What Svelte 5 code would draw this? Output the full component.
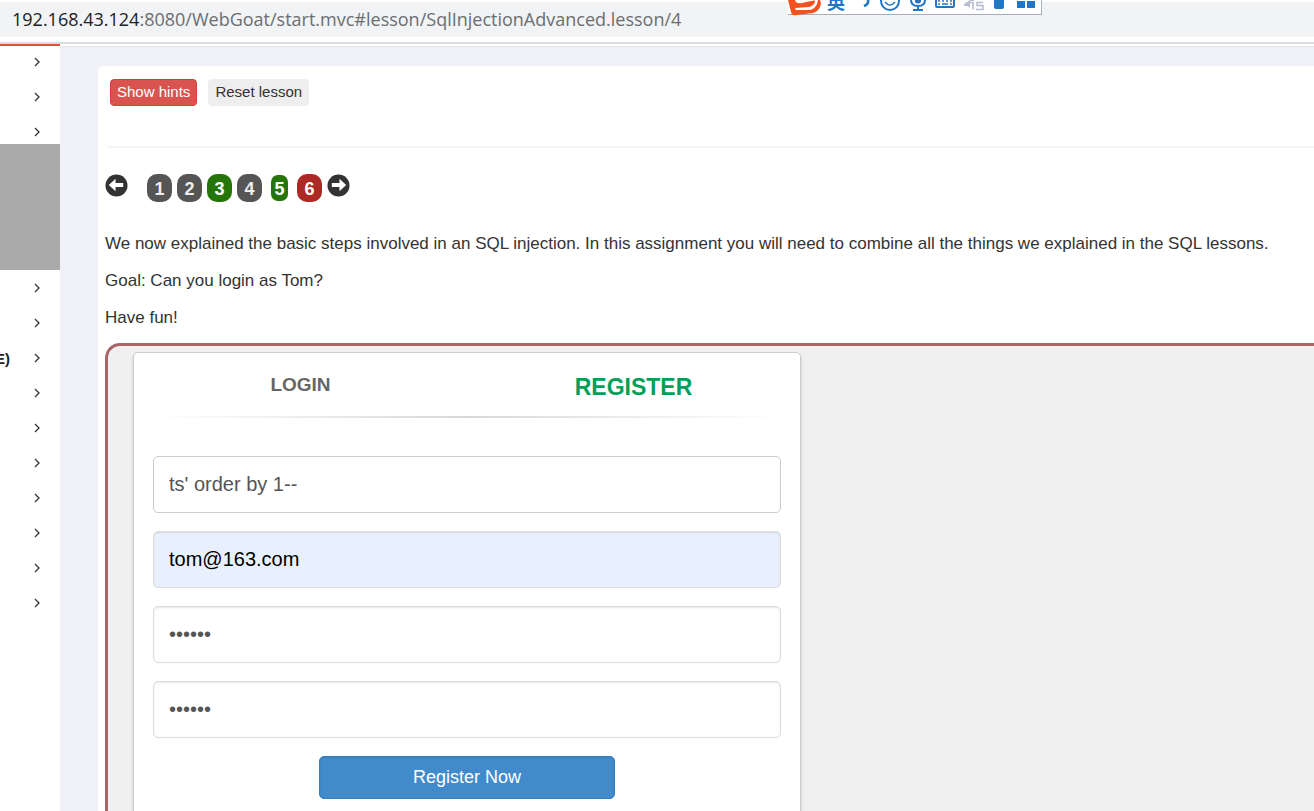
<script lang="ts">
  const upper = ['General', 'Injection basics', 'Introduction'];
  const lower = ['Authentication', 'Sensitive data', 'XXE', 'Access control', 'XSS', 'Deserialization', 'Components', 'Request forgery', 'Client side', 'Challenges'];
  const pages = [
    { n: 1, kind: 'plain' },
    { n: 2, kind: 'plain' },
    { n: 3, kind: 'solved' },
    { n: 4, kind: 'plain' },
    { n: 5, kind: 'solved current' },
    { n: 6, kind: 'open' },
  ];
  let username = $state("ts' order by 1--");
  let email = $state('tom@163.com');
  let password = $state('secret');
  let confirm = $state('secret');
</script>

{#snippet chevron()}
  <svg class="chevron" viewBox="0 0 6 10" aria-hidden="true"><path d="M1 1l4 4-4 4" /></svg>
{/snippet}

<div class="page">
  <header class="address">
    <div class="url"><span class="host">192.168.43.124</span>:8080/WebGoat/start.mvc#lesson/SqlInjectionAdvanced.lesson/4</div>
    <div class="ime">
      <svg class="ime-logo" viewBox="0 0 34 16" aria-hidden="true">
        <path d="M0 0L3 12Q4 16 9 15L25 13Q32 11 33 3L32 0Z" fill="#f4511e" />
        <path d="M7 0Q8 4 14 3L23 1Q27 0 27 1Q27 5 21 7L7 8L8 10L22 10Q29 8 30 0L24 0Z" fill="#fff" />
      </svg>
      <span class="ime-lang">英</span>
      <svg class="ime-icons" viewBox="0 0 182 14" aria-hidden="true">
        <g fill="none" stroke="#2176c7" stroke-width="2">
          <path d="M10 0Q11 4 6 6" stroke-width="2.6" />
          <circle cx="32" cy="1" r="9" />
          <path d="M27 2Q32 8 37 2" stroke-width="1.5" />
          <path d="M53 0Q53 6 60 6Q67 6 67 0M60 6v4M55 10h10" />
          <rect x="78" y="-8" width="18" height="15" rx="1" />
          <path d="M80 1h2m2 0h2m2 0h2m2 0h2M80 4h2m2 0h6m2 0h2" stroke-width="1.5" />
        </g>
        <path d="M57 0h6v2q-3 3-6 0zM136 0h10v7q0 2-2 2h-6q-2 0-2-2zM159 1h8v7h-8zM169 1h8v7h-8zM29 0h1v-2h-1zM34 0h1v-2h-1z" fill="#2176c7" />
        <path d="M106 4l6-4h4v9h-3l-3-3h-4z" fill="#b8c0d0" />
        <path d="M112 1h14v9h-14z" fill="#fff" />
        <path d="M112 2.500h3v7m3 0h7v-4h-6v-3h6" fill="none" stroke="#b3bccd" stroke-width="1.5" />
      </svg>
    </div>
  </header>

  <div class="body">
    <nav class="sidebar">
      <ul class="upper">
        {#each upper as item}
          <li><a href="#top" aria-label={item}>{@render chevron()}</a></li>
        {/each}
      </ul>
      <div class="submenu"></div>
      <ul class="lower">
        {#each lower as item}
          <li>
            <a href="#top" aria-label={item}>
              {#if item === 'XXE'}<b>E)</b>{/if}
              {@render chevron()}
            </a>
          </li>
        {/each}
      </ul>
    </nav>

    <main>
      <section class="lesson">
        <div class="tools">
          <button class="hints" type="button">Show hints</button>
          <button class="reset" type="button">Reset lesson</button>
        </div>

        <div class="pager">
          <button class="arrow prev" type="button" aria-label="Previous">
            <svg viewBox="0 0 24 24"><circle cx="12" cy="12" r="11.5" /><path d="M4 11.5l7-6.500v4.500h8v4h-8V18z" /></svg>
          </button>
          {#each pages as p}
            <a href="#top" class="num {p.kind}">{p.n}</a>
          {/each}
          <button class="arrow" type="button" aria-label="Next">
            <svg viewBox="0 0 24 24"><circle cx="12" cy="12" r="11.5" /><path d="M20 11.5L13 5v4.500H5v4h8V18z" /></svg>
          </button>
        </div>

        <div class="text">
          <p>We now explained the basic steps involved in an SQL injection. In this assignment you will need to combine all the things we explained in the SQL lessons.</p>
          <p>Goal: Can you login as Tom?</p>
          <p>Have fun!</p>
        </div>

        <div class="attack">
          <form class="panel" onsubmit={(e) => e.preventDefault()}>
            <div class="tabs">
              <a href="#top">LOGIN</a>
              <a href="#top" class="active">REGISTER</a>
            </div>
            <hr />
            <div class="fields">
              <input class="focused" type="text" aria-label="Username" bind:value={username} />
              <input class="filled" type="email" aria-label="Email" bind:value={email} />
              <input type="password" aria-label="Password" bind:value={password} />
              <input type="password" aria-label="Confirm password" bind:value={confirm} />
              <button class="submit" type="submit">Register Now</button>
            </div>
          </form>
        </div>
      </section>
    </main>
  </div>
</div>

<style>
  :global(body) { margin: 0; overflow: hidden; }
  .page {
    height: 100vh;
    overflow: hidden;
    display: flex;
    flex-direction: column;
    background: #fff;
    font-family: "Liberation Sans", Arial, sans-serif;
    font-size: 18px;
    color: #333;
  }
  * { box-sizing: border-box; }
  a { color: inherit; text-decoration: none; }
  ul { list-style: none; margin: 0; padding: 0; }
  button { font: inherit; cursor: pointer; }

  .address {
    position: relative;
    flex: none;
    padding: 2px 0 5px;
    border-bottom: 2px solid #dadce0;
  }
  .url {
    height: 35px;
    padding-left: 12px;
    background: #f1f3f4;
    color: #6b6e72;
    font-family: "Open Sans", sans-serif;
    font-size: 18px;
    line-height: 35px;
    white-space: nowrap;
  }
  .host { color: #202124; }
  .ime {
    position: absolute;
    top: 0;
    left: 788px;
    width: 254px;
    height: 15px;
    display: flex;
    border: solid #a9adb8;
    border-width: 0 1px 1px 0;
    background: #fff;
  }
  .ime-logo { flex: none; width: 34px; height: 16px; }
  .ime-lang {
    flex: none;
    width: 36px;
    height: 14px;
    padding-left: 5px;
    overflow: hidden;
    color: #2176c7;
    font: bold 18px/3px "Noto Sans CJK SC", sans-serif;
  }
  .ime-icons { flex: none; width: 182px; height: 14px; }

  .body { flex: 1; min-height: 0; display: flex; }
  .sidebar { flex: none; width: 60px; border-top: 2px solid #e74c3c; }
  .sidebar ul { display: flex; flex-direction: column; gap: 15px; }
  .sidebar .upper { padding: 6px 0 2px; }
  .sidebar .lower { padding-top: 8px; }
  .sidebar a {
    height: 20px;
    padding-right: 20px;
    display: flex;
    align-items: center;
    justify-content: flex-end;
    color: #222;
    font-size: 15px;
  }
  .sidebar b { margin-right: auto; margin-left: -5px; }
  .chevron { width: 6px; height: 10px; fill: none; stroke: #333; stroke-width: 1.3; }
  .submenu { height: 126px; background: #aaa; }

  main {
    flex: 1;
    min-width: 0;
    margin-top: 2px;
    padding: 19px 0 0 38px;
    border-top: 1px solid #e2e3e8;
    background: #f0f1f7;
  }
  .lesson {
    min-height: 100%;
    padding: 13px 0 0 7px;
    border-radius: 5px 0 0 0;
    background: #fff;
  }
  .tools {
    height: 69px;
    padding-left: 5px;
    display: flex;
    align-items: flex-start;
    gap: 11px;
    border-bottom: 2px solid #f5f5f5;
    border-radius: 0 0 0 6px;
  }
  .tools button {
    height: 27px;
    padding: 0 6px 2px;
    border: 1px solid #eee;
    border-radius: 4px;
    background: #eee;
    color: #333;
    font-size: 15px;
    line-height: 23px;
  }
  .tools .hints { border-color: #d43f3a; background: #d9534f; color: #fff; }

  .pager { display: flex; align-items: flex-start; gap: 5px; padding-top: 26px; }
  .arrow { width: 23px; height: 23px; padding: 0; border: 0; background: none; }
  .arrow svg { display: block; width: 23px; height: 23px; fill: #333; }
  .arrow path { fill: #fff; }
  .prev { margin-right: 14px; }
  .num {
    width: 25px;
    height: 28px;
    border-radius: 10px;
    background: #555;
    color: #eee;
    font-weight: bold;
    line-height: 30px;
    text-align: center;
  }
  .solved { background: #267508; color: #fff; }
  .open { background: #ac2925; color: #fff; }
  .current { width: 17px; height: 26px; margin: 1px 4px; border-radius: 7px; line-height: 28px; }

  .text { padding-top: 29px; font-size: 17px; }
  .text p { margin: 0 0 12px; line-height: 25px; }
  .text p:last-child { margin-bottom: 13px; }

  .attack {
    padding: 6px 0 20px 25px;
    border: solid #a66;
    border-width: 3px 0 3px 3px;
    border-radius: 15px 0 0 15px;
    background: #f0f0f0;
  }
  .panel {
    max-width: 668px;
    padding-bottom: 60px;
    border: 1px solid #ccc;
    border-radius: 5px;
    background: #fff;
    box-shadow: 0 2px 3px rgba(0, 0, 0, 0.2);
  }
  .tabs { display: grid; grid-template-columns: 1fr 1fr; height: 63px; text-align: center; }
  .tabs a { color: #666; font-size: 19px; font-weight: bold; line-height: 63px; }
  .tabs .active { color: #029f5b; font-size: 23px; line-height: 68px; }
  hr {
    height: 2px;
    margin: 0 18px;
    border: 0;
    background: linear-gradient(to right, transparent, #d8d8d8 50%, transparent);
  }
  .fields { display: flex; flex-direction: column; gap: 18px; padding: 38px 19px 0; }
  .fields input {
    width: 100%;
    height: 57px;
    padding: 0 15px;
    border: 1px solid #ddd;
    border-radius: 5px;
    outline: 0;
    background: #fff;
    box-shadow: inset 0 1px 2px rgba(0, 0, 0, 0.1);
    color: #555;
    font: 20px "Liberation Sans", Arial, sans-serif;
  }
  .fields .focused { border-color: #ccc; box-shadow: none; }
  .fields .filled { background: #e8f0fe; color: #000; }
  .submit {
    align-self: center;
    width: 47%;
    height: 43px;
    padding: 0;
    border: 1px solid #357ebd;
    border-radius: 5px;
    background: #428bca;
    color: #fff;
    box-shadow: inset 0 1px 2px rgba(0, 0, 0, 0.1);
  }
</style>
